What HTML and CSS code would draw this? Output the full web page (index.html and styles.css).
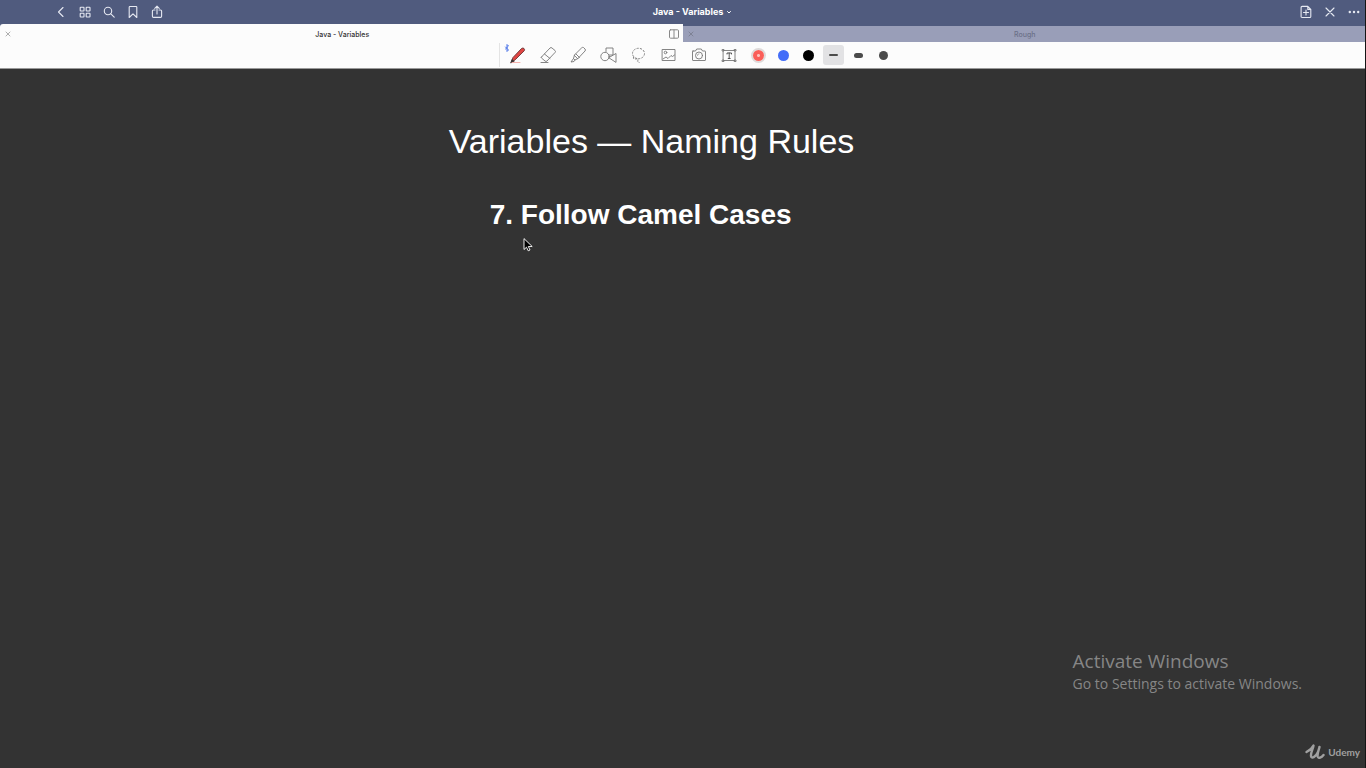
FILE: index.html
```html
<!DOCTYPE html>
<html lang="en">
<head>
<meta charset="utf-8">
<title>Java - Variables</title>
<link rel="stylesheet" href="styles.css">
</head>
<body>
<div class="app">
  <header class="navbar">
    <div class="nav-group nav-left">
      <button class="icon-btn" aria-label="Back"><svg viewBox="0 0 14 14"><path d="M9 2.5 4.5 7 9 11.5"/></svg></button>
      <button class="icon-btn" aria-label="Thumbnails"><svg viewBox="0 0 14 14"><rect x="2.2" y="2.2" width="3.8" height="3.8" rx=".6"/><rect x="8.2" y="2.2" width="3.8" height="3.8" rx=".6"/><rect x="2.2" y="8.2" width="3.8" height="3.8" rx=".6"/><rect x="8.2" y="8.2" width="3.8" height="3.8" rx=".6"/></svg></button>
      <button class="icon-btn" aria-label="Search"><svg viewBox="0 0 14 14"><circle cx="6" cy="6" r="3.7"/><path d="m8.8 8.8 3.4 3.4"/></svg></button>
      <button class="icon-btn" aria-label="Bookmark"><svg viewBox="0 0 14 14"><path d="M3.2 12.500V2.200q0-.7.7-.7h6.200q.7 0 .7.700v10.300L7 8.800z"/></svg></button>
      <button class="icon-btn" aria-label="Share"><svg viewBox="0 0 14 14"><path d="M5 5H3.500q-1.100 0-1.100 1.100v5.200q0 1.100 1.100 1.100h7q1.100 0 1.100-1.100V6.100q0-1.100-1.100-1.100H9M7 9V1.300M4.800 3.400 7 1.200l2.200 2.200"/></svg></button>
    </div>
    <button class="doc-title">Java - Variables <svg viewBox="0 0 6 6"><path d="m1.500 2.500 1.500 1.500 1.500-1.500"/></svg></button>
    <div class="nav-group nav-right">
      <button class="icon-btn" aria-label="Add page"><svg viewBox="0 0 14 14"><path d="M3.200 1.400h5.600l3 3v7q0 1.100-1.100 1.100H3.200q-1.100 0-1.100-1.100V2.500q0-1.100 1.100-1.100zM8.800 1.400v3h3M7 5v5M4.500 7.500h5"/></svg></button>
      <button class="icon-btn" aria-label="Close"><svg viewBox="0 0 14 14"><path d="m3 3 8 8M11 3l-8 8"/></svg></button>
      <button class="icon-btn" aria-label="More"><svg class="solid" viewBox="0 0 14 14"><circle cx="2.800" cy="7" r="1.200"/><circle cx="7" cy="7" r="1.200"/><circle cx="11.200" cy="7" r="1.200"/></svg></button>
    </div>
  </header>
  <nav class="tabs">
    <div class="tab active">
      <button class="tab-close" aria-label="Close Java - Variables"><svg viewBox="0 0 6 6"><path d="m1 1 4 4M5 1 1 5"/></svg></button>
      <button class="tab-label">Java - Variables</button>
      <button class="split" aria-label="Split view"><svg viewBox="0 0 10 10"><rect x=".5" y=".8" width="9" height="8.400" rx="1"/><path d="M5 1v8"/></svg></button>
    </div>
    <div class="tab">
      <button class="tab-close" aria-label="Close Rough"><svg viewBox="0 0 6 6"><path d="m1 1 4 4M5 1 1 5"/></svg></button>
      <button class="tab-label">Rough</button>
    </div>
  </nav>
  <div class="toolbar">
    <div class="tools">
      <button class="tool" aria-label="Pen"><svg viewBox="0 0 30 24"><path class="bt" d="m2.500 4 3 3L4 8.500v-7L5.500 3l-3 3"/><path d="m8 19.500 2-5L18.500 5.500q1.500-1 2.500 0t.3 2.200L12.500 16.500z" fill="#df4543" stroke="#683535"/><path d="m8 19.500 1.200-3 1.600 1.700z" fill="#333" stroke="#333"/><path d="M9 19.500h8" stroke="#f5aaa5"/></svg></button>
      <button class="tool" aria-label="Eraser"><svg viewBox="0 0 30 24"><path d="m8.500 14 8.500-9q1-1 2 0l3 2.500q1 1 0 2L14 18q-1 1-2 0l-3.500-3q-.5-.5 0-1zM11.500 11l5.500 4.500M8 19.500h7"/></svg></button>
      <button class="tool" aria-label="Highlighter"><svg viewBox="0 0 30 24"><path d="m11.500 12 7-7q1-1 2-.5l1.500 1.500q1 1 0 2l-7 7.500zM11.500 12l-1 3.500 1.500 1.500 3-1.500M10.500 15.500 8 19l3-.5 1-1.500M13 11l3.500 3.500"/></svg></button>
      <button class="tool" aria-label="Shapes"><svg viewBox="0 0 30 24"><path d="M13 8.500V5h7v7h-4"/><circle cx="12" cy="13.500" r="4.200"/><path d="m16 14.500 7-4v8.500z"/></svg></button>
      <button class="tool" aria-label="Lasso"><svg viewBox="0 0 30 24"><ellipse cx="15.500" cy="10.500" rx="6" ry="5.200" stroke-linecap="butt" stroke-dasharray="2.200 1.200"/><path d="M10.500 14q-.5 2.500 2 2t2.500.5-.5 1.500 2 1.500" stroke-linecap="butt" stroke-dasharray="2.200 1"/></svg></button>
      <button class="tool" aria-label="Image"><svg viewBox="0 0 30 24"><rect x="9.500" y="6.500" width="12.500" height="11"/><circle cx="12.500" cy="9.500" r="1.300"/><path d="m10 16 3-2 2 1.500 3-3 1.500 1 2-1.500"/></svg></button>
      <button class="tool" aria-label="Camera"><svg viewBox="0 0 30 24"><path d="M10 8h2.500l1.200-2h4.600l1.200 2H22q.5 0 .5.500v8.500q0 .5-.5.500H10q-.5 0-.5-.500V8.500q0-.5.5-.500z"/><circle cx="16" cy="12.500" r="3.500"/><path d="M14.300 12.500q0-1.700 1.700-1.700" stroke-width=".6"/></svg></button>
      <button class="tool" aria-label="Text"><svg viewBox="0 0 30 24"><rect x="10.500" y="7.500" width="11.500" height="10"/><path d="M9.500 6.500h1.500v1.500H9.500zM21.500 6.500H23v1.500h-1.500zM9.500 17H11v1.500H9.500zM21.500 17H23v1.500h-1.500z"/><path d="M14 11v-1h4.500v1M16.200 10v5.500M15.200 15.500h2" stroke="#444"/></svg></button>
    </div>
    <div class="styles">
      <button class="swatch" aria-label="Red"><span class="dot red"></span></button>
      <button class="swatch" aria-label="Blue"><span class="dot blue"></span></button>
      <button class="swatch" aria-label="Black"><span class="dot black"></span></button>
      <button class="swatch chosen" aria-label="Thin stroke"><span class="stroke thin"></span></button>
      <button class="swatch" aria-label="Medium stroke"><span class="stroke medium"></span></button>
      <button class="swatch" aria-label="Thick stroke"><span class="stroke thick"></span></button>
    </div>
  </div>
  <main class="page">
    <div class="notes">
      <h1>Variables — Naming Rules</h1>
      <h2>7. Follow Camel Cases</h2>
    </div>
    <svg class="cursor" viewBox="0 0 10 14"><path d="M1 1v10.500l2.500-2.300 1.700 3.600 1.800-.8-1.700-3.500H8.800z"/></svg>
    <aside class="activate">
      <p class="activate-title">Activate Windows</p>
      <p class="activate-text">Go to Settings to activate Windows.</p>
    </aside>
    <div class="brand">
      <svg viewBox="0 0 20 18"><path d="M1.500 9C4.500 7.500 7.500 4.500 8.500 2.500 8 6 5.500 10 6 13c.5 3 4.500 1.500 7-4L14.500 4c-1 4-2.500 7-1.800 9.500.8 2.500 3.800 1 5.800-1.500"/></svg>
      <span>Udemy</span>
    </div>
  </main>
</div>
</body>
</html>
```
FILE: styles.css
```css
* { box-sizing: border-box; }
body { margin: 0; background: #333; font-family: Inter, "Liberation Sans", sans-serif; }
button { border: 0; padding: 0; margin: 0; background: none; font: inherit; color: inherit; }
svg { display: block; fill: none; stroke: currentColor; stroke-linecap: round; stroke-linejoin: round; }
h1, h2, p { margin: 0; }

.app { min-height: 100vh; display: flex; flex-direction: column; border-right: 1px solid #151515; }

.navbar { height: 24px; display: grid; grid-template-columns: 1fr auto 1fr; align-items: center; background: #505b7e; color: #e6e9f2; }
.nav-group { display: flex; gap: 10px; }
.nav-left { padding-left: 54px; }
.nav-right { justify-content: flex-end; padding-right: 4px; }
.icon-btn svg { width: 14px; height: 14px; stroke-width: 1.1; }
.icon-btn .solid { fill: currentColor; stroke: none; }
.doc-title { display: flex; align-items: center; gap: 3px; padding-left: 20px; font-size: 9px; font-weight: 700; line-height: 12px; color: #fff; }
.doc-title svg { width: 6px; height: 6px; }

.tabs { display: flex; align-items: flex-end; height: 18px; background: #505b7e; }
.tab { flex: 1; height: 16px; display: grid; grid-template-columns: 16px 1fr 16px; align-items: center; background: #999eb8; color: #6b7088; font-size: 7px; font-weight: 500; line-height: 10px; }
.tab.active { height: 18px; background: #fcfcfc; color: #333; border-top-left-radius: 3px; padding-top: 2px; }
.tab-close { display: flex; justify-content: center; color: #777b8c; }
.active .tab-close { color: #999; }
.tab-close svg { width: 6px; height: 6px; stroke-width: 0.8; }
.tab-label { text-align: center; padding: 1px 0 0 2px; }
.split { display: flex; justify-content: flex-start; color: #888; }
.split svg { width: 10px; height: 10px; margin-left: 2px; }

.toolbar { height: 27px; display: flex; justify-content: center; align-items: center; padding-left: 29px; background: #fcfcfc; border-bottom: 1px solid #999; }
.tools { display: flex; align-items: center; border-left: 1px solid #e4e4e4; padding: 0 3px; }
.tool svg { width: 30px; height: 24px; color: #777; stroke-width: 0.9; }
.tool .bt { stroke: #4c75e8; stroke-width: 1; }
.styles { display: flex; align-items: center; }
.swatch { width: 25px; height: 20px; display: flex; align-items: center; justify-content: center; }
.dot { width: 11px; height: 11px; border-radius: 50%; }
.red { background: radial-gradient(circle, #ffc0bb 1px, #fa5e59 2px); box-shadow: 0 0 0 2px #dedada; }
.blue { background: #436df8; }
.black { background: #000; }
.chosen { width: 21px; margin: 0 2px; border-radius: 3px; background: #e2e2e4; }
.stroke { background: #4b4b4b; border-radius: 5px; }
.thin { width: 9px; height: 2px; }
.medium { width: 9px; height: 5px; }
.thick { width: 9px; height: 9px; }

.page { flex: 1; position: relative; background: #333; color: #fff; }
.notes { width: fit-content; margin: 0 auto; padding: 51px 62px 0 0; font-family: "Liberation Sans", Arial, sans-serif; }
.notes h1 { font-size: 34px; font-weight: 400; line-height: 42px; }
.notes h2 { margin-top: 35px; padding-left: 41px; font-size: 28px; font-weight: 700; line-height: 36px; }
.cursor { position: absolute; left: 523px; top: 169px; width: 10px; height: 14px; fill: #000; stroke: #fff; stroke-width: 0.9; }
.activate { position: absolute; right: 63px; bottom: 74px; font-family: "Open Sans", "Noto Sans", sans-serif; color: #868686; }
.activate-title { font-size: 19px; line-height: 26px; }
.activate-text { font-size: 14px; line-height: 20px; }
.brand { position: absolute; right: 5px; bottom: 7px; display: flex; align-items: center; gap: 3px; color: #a0a0a0; font-family: Lato, sans-serif; font-size: 10px; font-weight: 700; line-height: 18px; }
.brand svg { width: 20px; height: 18px; stroke-width: 2.4; }
```
